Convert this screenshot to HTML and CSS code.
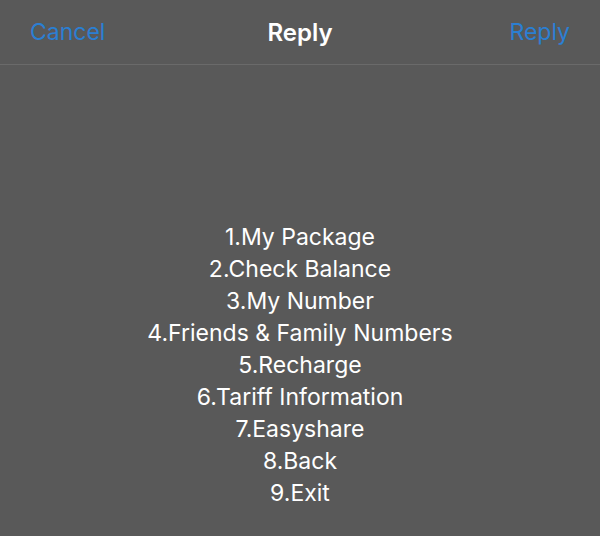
FILE: index.html
```html
<!DOCTYPE html>
<html lang="en">
<head>
  <meta charset="UTF-8">
  <title>Reply</title>
  <link rel="stylesheet" href="styles.css">
</head>
<body>
  <div class="nav-bar">
    <span class="nav-btn">Cancel</span>
    <span class="nav-title">Reply</span>
    <span class="nav-btn nav-right">Reply</span>
  </div>
  <div class="message">
    <p>1.My Package</p>
    <p>2.Check Balance</p>
    <p>3.My Number</p>
    <p>4.Friends &amp; Family Numbers</p>
    <p>5.Recharge</p>
    <p>6.Tariff Information</p>
    <p>7.Easyshare</p>
    <p>8.Back</p>
    <p>9.Exit</p>
  </div>
</body>
</html>
```

FILE: styles.css
```css
body {
  margin: 0;
  height: 536px;
  overflow: hidden;
  background-color: #595959;
  font-family: Inter, "Noto Sans", sans-serif;
  color: #fff;
}

.nav-bar {
  display: grid;
  grid-template-columns: 1fr auto 1fr;
  align-items: center;
  height: 64px;
  padding: 0 30px;
  border-bottom: 1px solid #6a6a6a;
}

.nav-btn {
  font-size: 23px;
  color: #2b7fd3;
}

.nav-right {
  text-align: right;
}

.nav-title {
  font-size: 24px;
  font-weight: 600;
}

.message {
  padding-top: 156px;
  text-align: center;
}

.message p {
  margin: 0;
  font-size: 23px;
  line-height: 32px;
}
```
